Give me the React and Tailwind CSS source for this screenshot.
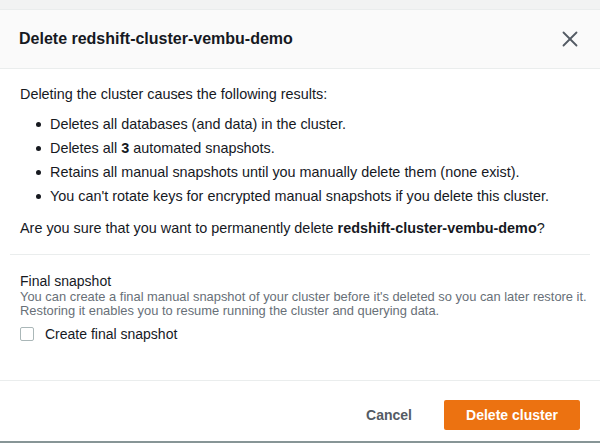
import { X } from "lucide-react";

const bullets = [
  <>Deletes all databases (and data) in the cluster.</>,
  <>
    Deletes all <b className="font-bold">3</b> automated snapshots.
  </>,
  <>Retains all manual snapshots until you manually delete them (none exist).</>,
  <>You can't rotate keys for encrypted manual snapshots if you delete this cluster.</>,
];

export default function App() {
  return (
    <div
      className="h-[443px] w-[600px] overflow-hidden bg-[#f2f3f3] text-[#16191f]"
      style={{ fontFamily: '"Liberation Sans", Arial, sans-serif' }}
    >
      <div className="h-[9px]" />
      <div className="flex h-[434px] flex-col border-t border-[#eaeded] bg-white">
        {/* header */}
        <div className="flex h-[59px] items-center justify-between border-b border-[#eaeded] bg-[#fafafa] pl-[19px] pr-[17px]">
          <h2 className="text-[16px] font-bold">Delete redshift-cluster-vembu-demo</h2>
          <X className="h-[26px] w-[26px] text-[#545b64]" strokeWidth={1.7} />
        </div>

        {/* body */}
        <div className="flex-1 px-[20px] pt-[15px] text-[14.4px]">
          <p className="leading-[20px]">Deleting the cluster causes the following results:</p>
          <ul className="mt-[10px] flex flex-col gap-[4px] pl-[30px]">
            {bullets.map((b, i) => (
              <li key={i} className="relative leading-[20px]">
                <span className="absolute left-[-14px] top-[8px] h-[5px] w-[5px] rounded-full bg-[#16191f]" />
                {b}
              </li>
            ))}
          </ul>
          <p className="mt-[12px] leading-[20px]">
            Are you sure that you want to permanently delete{" "}
            <b className="font-bold">redshift-cluster-vembu-demo</b>?
          </p>
          <div className="mr-[-10px] ml-[-10px] mt-[16px] border-t border-[#eaeded]" />
          <div className="pt-[17px]">
            <div className="text-[14px] leading-[18px]">Final snapshot</div>
            <p className="whitespace-nowrap text-[12.9px] leading-[14px] text-[#687078]">
              You can create a final manual snapshot of your cluster before it's deleted so you can later restore it.
              <br />
              Restoring it enables you to resume running the cluster and querying data.
            </p>
            <label className="mt-[6px] flex items-center gap-[11px]">
              <span className="h-[14px] w-[14px] rounded-[2px] border border-[#aab7b8] bg-white" />
              <span className="text-[14px] leading-[20px]">Create final snapshot</span>
            </label>
          </div>
        </div>

        {/* footer */}
        <div className="flex h-[61px] items-start justify-end gap-[32px] border-t border-[#eaeded] pr-[20px] pt-[19px]">
          <button className="h-[30px] text-[14px] font-bold text-[#545b64]">Cancel</button>
          <button className="h-[30px] w-[136px] rounded-[2px] bg-[#ec7211] text-[14px] font-bold text-white">
            Delete cluster
          </button>
        </div>
        <div className="h-[2px] bg-[#879596]" />
      </div>
    </div>
  );
}
